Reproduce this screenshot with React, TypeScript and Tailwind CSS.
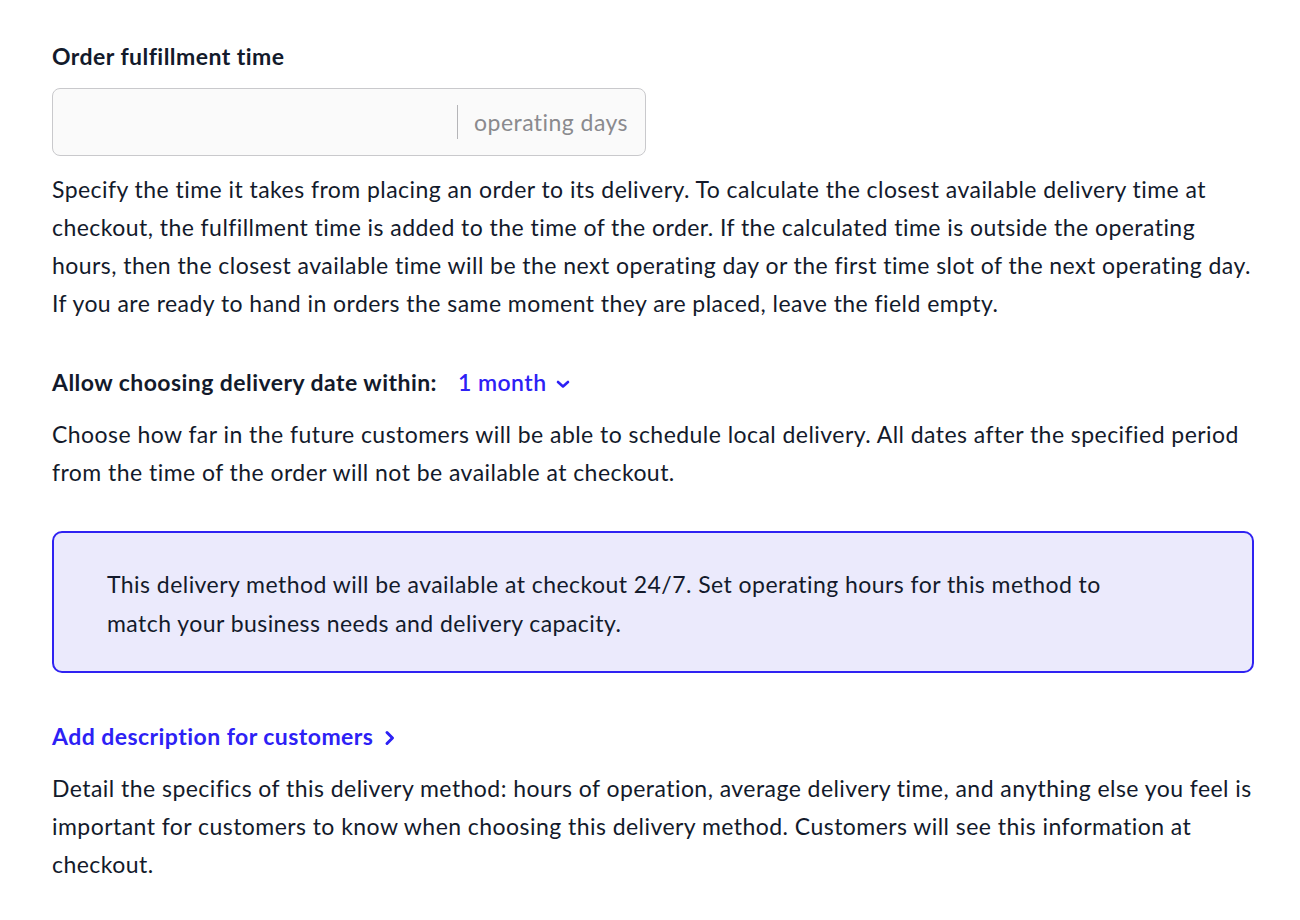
import React from 'react';

const ChevronDown = () => (
  <svg width="16" height="16" viewBox="0 0 16 16" fill="none" className="ml-[8px] mt-[3px]">
    <path d="M3 6l5 4.5L13 6" stroke="currentColor" strokeWidth="2.6" strokeLinecap="round" strokeLinejoin="round" />
  </svg>
);

const ChevronRight = () => (
  <svg width="16" height="18" viewBox="0 0 16 18" fill="none" className="ml-[9px] mt-[3px]">
    <path d="M5 3.5L10.5 9 5 14.5" stroke="currentColor" strokeWidth="3" strokeLinecap="round" strokeLinejoin="round" />
  </svg>
);

export default function App() {
  return (
    <div className="min-h-screen bg-white font-['Lato','Liberation_Sans',sans-serif] text-[#131a2b] text-[23px] tracking-[0.45px] leading-[38px]">
      <div className="w-[1202px] pl-[52px] pt-[42px] box-content">
        <h2 className="font-bold leading-[28px]">Order fulfillment time</h2>

        <div className="mt-[18px] flex h-[68px] w-[594px] items-center rounded-lg border border-[#c9c9cc] bg-[#fafafa]">
          <input className="h-full min-w-0 flex-1 bg-transparent px-4 outline-none" />
          <div className="h-[34px] w-px bg-[#b5b5b8]" />
          <span className="pl-4 pr-[17px] text-[#8a8a8e]">operating days</span>
        </div>

        <p className="mt-[14px]">
          Specify the time it takes from placing an order to its delivery. To calculate the closest available delivery time at checkout, the fulfillment time is added to the time of the order. If the calculated time is outside the operating hours, then the closest available time will be the next operating day or the first time slot of the next operating day. If you are ready to hand in orders the same moment they are placed, leave the field empty.
        </p>

        <div className="mt-[41px] flex items-center">
          <span className="font-bold">Allow choosing delivery date within:</span>
          <button className="ml-[21px] flex items-center font-semibold text-[#2d21f5]">
            1 month
            <ChevronDown />
          </button>
        </div>

        <p className="mt-[14px]">
          Choose how far in the future customers will be able to schedule local delivery. All dates after the specified period from the time of the order will not be available at checkout.
        </p>

        <div className="mt-[40px] rounded-[10px] border-2 border-[#2f22f2] bg-[#ebeafc] pt-[32px] pb-[28px] pl-[53px] pr-[53px] leading-[39px]">
          <p className="max-w-[1000px]">
            This delivery method will be available at checkout 24/7. Set operating hours for this method to match your business needs and delivery capacity.
          </p>
        </div>

        <button className="mt-[44px] flex items-center font-bold text-[#2d21f5]">
          Add description for customers
          <ChevronRight />
        </button>

        <p className="mt-[14px]">
          Detail the specifics of this delivery method: hours of operation, average delivery time, and anything else you feel is important for customers to know when choosing this delivery method. Customers will see this information at checkout.
        </p>
      </div>
    </div>
  );
}
